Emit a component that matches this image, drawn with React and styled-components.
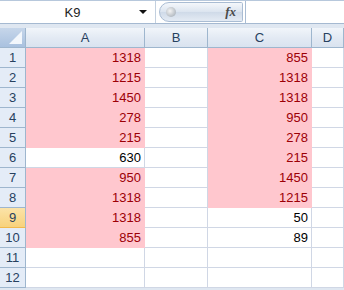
import React from 'react';
import styled, { createGlobalStyle } from 'styled-components';

const GlobalStyle = createGlobalStyle`
  html, body {
    margin: 0;
    padding: 0;
    background: #ffffff;
    font-family: "Liberation Sans", Arial, sans-serif;
    overflow: hidden;
  }
`;

const Window = styled.div`
  width: 344px;
  height: 290px;
  display: flex;
  flex-direction: column;
  background: #dfe7f1;
  overflow: hidden;
`;

const FormulaBar = styled.div`
  display: flex;
  align-items: stretch;
  height: 24px;
  border-top: 1px solid #b7c8dc;
  border-bottom: 1px solid #a5b9d1;
  background: #ffffff;
  box-sizing: border-box;
`;

const NameBox = styled.div`
  width: 156px;
  display: flex;
  align-items: center;
  background: #ffffff;
  border-right: 1px solid #c3d0df;
  box-sizing: border-box;
`;

const NameText = styled.span`
  flex: 1;
  text-align: center;
  font-size: 13px;
  color: #222;
  padding-left: 6px;
`;

const DropArrow = styled.span`
  width: 0;
  height: 0;
  margin-right: 8px;
  border-left: 4px solid transparent;
  border-right: 4px solid transparent;
  border-top: 4px solid #111;
`;

const Pill = styled.div`
  width: 84px;
  margin: 1px 0 1px 3px;
  display: flex;
  align-items: center;
  justify-content: space-between;
  padding: 0 6px 0 6px;
  box-sizing: border-box;
  border: 1px solid #a9bcd3;
  border-radius: 12px 2px 2px 12px;
  background: linear-gradient(#f4f7fb, #dbe4ef 50%, #cfdae8 51%, #e4ebf4);
`;

const Knob = styled.span`
  width: 10px;
  height: 10px;
  border-radius: 50%;
  background: radial-gradient(circle at 40% 40%, #f4f4f4, #9aa4ae);
`;

const Fx = styled.span`
  font-family: "Liberation Serif", "Times New Roman", serif;
  font-style: italic;
  font-weight: bold;
  font-size: 13px;
  color: #4a4a4a;
`;

const FormulaInput = styled.div`
  flex: 1;
  background: #ffffff;
  border-left: 1px solid #a9bcd3;
  margin-left: 2px;
`;

const Spacer = styled.div`
  height: 4px;
`;

const Grid = styled.div`
  display: grid;
  grid-template-columns: 26px 119px 63px 104px 32px;
  grid-auto-rows: 20px;
  background: #ffffff;
`;

const Corner = styled.div`
  background: linear-gradient(#c6d6ea, #a9c1df);
  border-right: 1px solid #9eb6ce;
  border-bottom: 1px solid #9eb6ce;
  position: relative;
  &::after {
    content: '';
    position: absolute;
    right: 3px;
    bottom: 3px;
    border-left: 13px solid transparent;
    border-bottom: 13px solid #f3f7fc;
  }
`;

const ColHead = styled.div`
  display: flex;
  align-items: center;
  justify-content: center;
  font-size: 13px;
  color: #27415f;
  background: linear-gradient(#f1f5fa, #e2e9f3 55%, #d9e3ef);
  border-right: 1px solid #9eb6ce;
  border-bottom: 1px solid #9eb6ce;
`;

const RowHead = styled.div`
  display: flex;
  align-items: center;
  justify-content: center;
  font-size: 13px;
  color: #27415f;
  background: ${p => (p.$active ? 'linear-gradient(#fbe3a8, #f8d27c)' : '#e4ecf7')};
  border-right: 1px solid #9eb6ce;
  border-bottom: 1px solid ${p => (p.$active ? '#f2b94d' : '#9eb6ce')};
`;

const Cell = styled.div`
  display: flex;
  align-items: center;
  justify-content: flex-end;
  padding-right: 3px;
  font-size: 13px;
  color: ${p => (p.$pink ? '#9c0006' : '#000')};
  background: ${p => (p.$pink ? '#ffc7ce' : '#fff')};
  border-right: 1px solid ${p => (p.$pink ? '#ffc7ce' : '#d0d7e5')};
  border-bottom: 1px solid ${p => (p.$pink ? '#ffc7ce' : '#d0d7e5')};
`;

const rows = [
  [1318, true, 855, true],
  [1215, true, 1318, true],
  [1450, true, 1318, true],
  [278, true, 950, true],
  [215, true, 278, true],
  [630, false, 215, true],
  [950, true, 1450, true],
  [1318, true, 1215, true],
  [1318, true, 50, false],
  [855, true, 89, false],
  ['', false, '', false],
  ['', false, '', false],
];

export default function App() {
  return (
    <Window>
      <GlobalStyle />
      <FormulaBar>
        <NameBox>
          <NameText>K9</NameText>
          <DropArrow />
        </NameBox>
        <Pill>
          <Knob />
          <Fx>fx</Fx>
        </Pill>
        <FormulaInput />
      </FormulaBar>
      <Spacer />
      <Grid>
        <Corner />
        <ColHead>A</ColHead>
        <ColHead>B</ColHead>
        <ColHead>C</ColHead>
        <ColHead>D</ColHead>
        {rows.map(([a, pa, c, pc], i) => (
          <React.Fragment key={i}>
            <RowHead $active={i === 8}>{i + 1}</RowHead>
            <Cell $pink={pa}>{a}</Cell>
            <Cell />
            <Cell $pink={pc}>{c}</Cell>
            <Cell />
          </React.Fragment>
        ))}
      </Grid>
    </Window>
  );
}
